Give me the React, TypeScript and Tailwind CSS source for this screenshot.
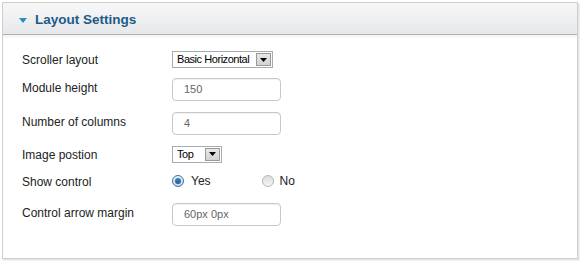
import React from "react";

const font = { fontFamily: '"Liberation Sans", Arial, sans-serif' };

function SelectBox({ value, width }: { value: string; width: string }) {
  return (
    <div className={`flex h-[17px] items-center border border-[#a5acb2] bg-white ${width}`}>
      <span className="flex-1 pl-[4px] text-[11px] leading-none tracking-[-0.45px] text-black">{value}</span>
      <span className="mr-[1px] flex h-[13px] w-[15px] items-center justify-center border border-[#9a9a9a] bg-gradient-to-b from-[#e8e8e8] to-[#d2d2d2]">
        <svg width="7" height="4" viewBox="0 0 7 4">
          <path d="M0 0 H7 L3.5 4 Z" fill="#000" />
        </svg>
      </span>
    </div>
  );
}

function TextInput({ value }: { value: string }) {
  return (
    <div className="flex h-[23px] w-[109px] items-center rounded-[4px] border border-[#c8c8c8] bg-white pl-[11px] text-[11px] text-[#666] shadow-[inset_0_1px_1px_rgba(0,0,0,0.06)]">
      {value}
    </div>
  );
}

function Radio({ checked }: { checked: boolean }) {
  return checked ? (
    <span className="flex h-[12px] w-[12px] items-center justify-center rounded-full border border-[#3c6f9c] bg-gradient-to-b from-[#e9f1f8] to-[#c9d9e8]">
      <span className="block h-[6px] w-[6px] rounded-full bg-gradient-to-b from-[#3f86c4] to-[#1d5a95]" />
    </span>
  ) : (
    <span className="block h-[12px] w-[12px] rounded-full border border-[#b5b5b5] bg-gradient-to-b from-[#dcdcdc] to-[#f7f7f7]" />
  );
}

function Row({ label, children, className, center }: { label: string; children: React.ReactNode; className: string; center?: boolean }) {
  return (
    <div className={`flex ${center ? "items-center" : "items-start"} ${className}`}>
      <div className={`w-[150px] text-[12px] leading-[14px] text-[#222] ${center ? "pt-[1px]" : "pt-[3px]"}`}>{label}</div>
      {children}
    </div>
  );
}

export default function App() {
  return (
    <div className="h-[264px] w-[582px] bg-white pl-[2px] pt-[2px]" style={font}>
      <div className="h-[257px] w-[576px] border border-[#cfcfcf] bg-white shadow-[1px_1px_0_#e4e4e4,2px_2px_0_#f0f0f0]">
        <div className="flex h-[32px] items-center border-b border-[#aab2b5] bg-gradient-to-b from-[#f7f7f8] to-[#e7e8eb] pl-[16px] pt-[3px]">
          <svg width="8" height="5" viewBox="0 0 8 5" className="mr-[8px] mt-[1px]">
            <path d="M0 0 H8 L4 5 Z" fill="#2b8cc0" />
          </svg>
          <span className="text-[13.5px] font-bold text-[#1d5b87]">Layout Settings</span>
        </div>
        <div className="h-[4px] bg-gradient-to-b from-[#f1f1f1] to-white" />
        <div className="pl-[19px]">
          <Row label="Scroller layout" className="mt-[12px] h-[17px]" center>
            <SelectBox value="Basic Horizontal" width="w-[101px]" />
          </Row>
          <Row label="Module height" className="mt-[10px]">
            <TextInput value="150" />
          </Row>
          <Row label="Number of columns" className="mt-[11px]">
            <TextInput value="4" />
          </Row>
          <Row label="Image postion" className="mt-[11px] h-[16px]" center>
            <SelectBox value="Top" width="w-[50px]" />
          </Row>
          <Row label="Show control" className="mt-[13px] h-[12px]" center>
            <div className="flex items-center">
              <Radio checked />
              <span className="ml-[7px] text-[12px] text-[#222]">Yes</span>
              <span className="ml-[51px] block">
                <Radio checked={false} />
              </span>
              <span className="ml-[6px] text-[12px] text-[#222]">No</span>
            </div>
          </Row>
          <Row label="Control arrow margin" className="mt-[16px]">
            <TextInput value="60px 0px" />
          </Row>
        </div>
      </div>
    </div>
  );
}
